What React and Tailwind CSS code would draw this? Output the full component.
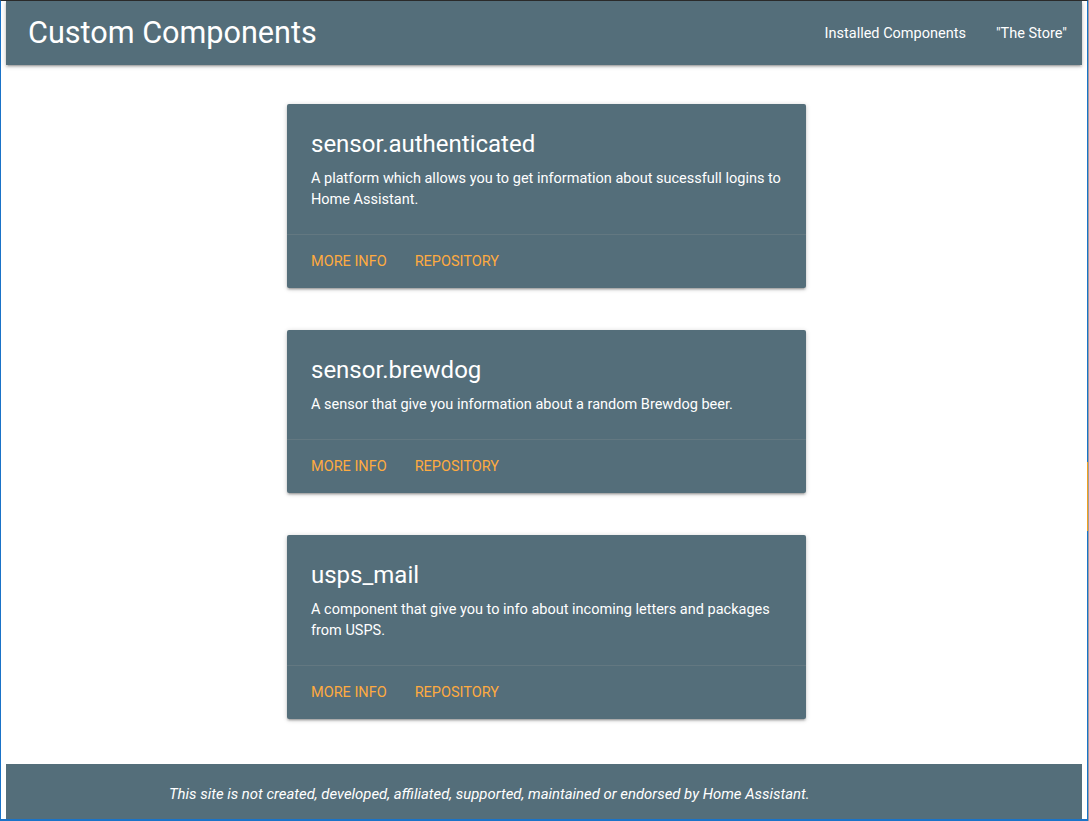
import React from "react";

const cards = [
  {
    title: "sensor.authenticated",
    desc: "A platform which allows you to get information about sucessfull logins to Home Assistant.",
  },
  {
    title: "sensor.brewdog",
    desc: "A sensor that give you information about a random Brewdog beer.",
  },
  {
    title: "usps_mail",
    desc: "A component that give you to info about incoming letters and packages from USPS.",
  },
];

function Card({ title, desc }) {
  return (
    <div className="w-[519px] bg-[#546e7a] text-white rounded-[2px] shadow-[0_2px_2px_0_rgba(0,0,0,0.14),0_3px_1px_-2px_rgba(0,0,0,0.12),0_1px_5px_0_rgba(0,0,0,0.2)]">
      <div className="p-[24px]">
        <div className="text-[24px] leading-[32px] mb-[8px] font-normal">{title}</div>
        <p className="text-[14.5px] leading-[21px]">{desc}</p>
      </div>
      <div className="border-t border-[rgba(160,160,160,0.2)] px-[24px] py-[16px] flex gap-[28px] text-[14.5px] leading-[21px] text-[#ffab40] uppercase">
        <span>More Info</span>
        <span>Repository</span>
      </div>
    </div>
  );
}

export default function App() {
  return (
    <div className="w-[1089px] h-[821px] bg-[#a0a0a0] overflow-hidden font-['Roboto',sans-serif]">
      <div className="relative w-[1088px] h-[821px] bg-white border-l border-r border-t border-b-2 border-l-[#1a73c8] border-r-[#1a73c8] border-b-[#1a73c8] border-t-[#2d2d2d] flex flex-col">
        <div className="absolute right-[-1px] top-[461px] w-[1px] h-[69px] bg-[#f0a020]" />
        <header className="mx-[5px] h-[64px] shrink-0 bg-[#546e7a] text-white flex items-center justify-between shadow-[0_2px_2px_0_rgba(0,0,0,0.14),0_3px_1px_-2px_rgba(0,0,0,0.12),0_1px_5px_0_rgba(0,0,0,0.2)]">
          <div className="pl-[22px] text-[30.6px] leading-[64px]">Custom Components</div>
          <nav className="flex text-[14.5px] leading-[64px] pt-[2px]">
            <span className="px-[15px]">Installed Components</span>
            <span className="px-[15px]">"The Store"</span>
          </nav>
        </header>
        <main className="pt-[39px] pl-[286px] flex flex-col gap-[42px]">
          {cards.map((c) => (
            <Card key={c.title} {...c} />
          ))}
        </main>
        <footer className="mx-[5px] mt-[45px] flex-1 bg-[#546e7a] text-white pl-[163px] pt-[19px]">
          <p className="italic text-[14.9px] leading-[22px]">
            This site is not created, developed, affiliated, supported, maintained or endorsed by Home Assistant.
          </p>
        </footer>
      </div>
    </div>
  );
}
